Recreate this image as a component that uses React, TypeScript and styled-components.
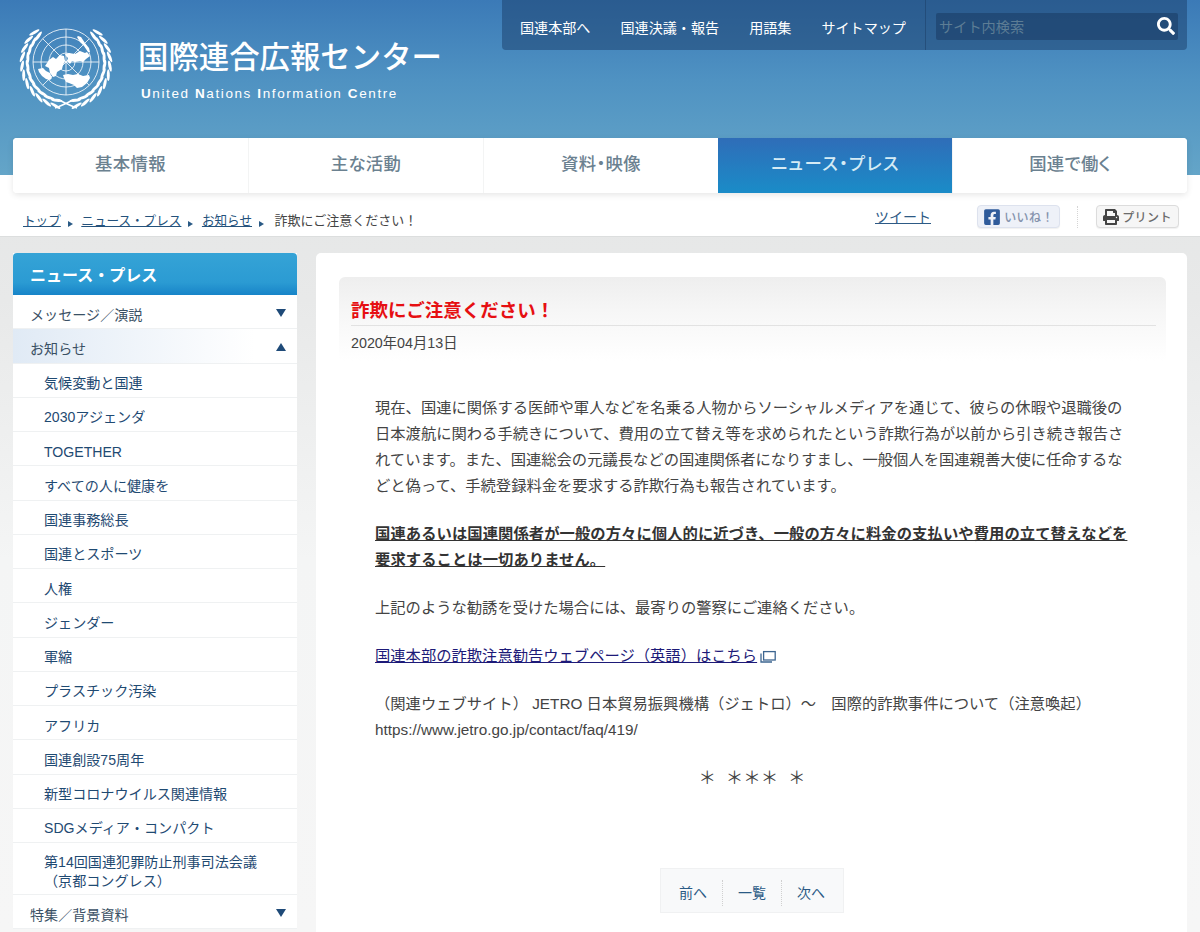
import styled, { createGlobalStyle } from 'styled-components';
import { FaFacebookSquare, FaPrint, FaSearch } from 'react-icons/fa';

const sans = `"Liberation Sans", "Noto Sans CJK JP", sans-serif`;

const GlobalStyle = createGlobalStyle`
  html, body {
    margin: 0;
    padding: 0;
    overflow: hidden;
  }
  body {
    font-family: ${sans};
    color: #444;
  }
  a {
    color: inherit;
  }
`;

const Page = styled.div`
  width: 1200px;
  height: 932px;
  overflow: hidden;
  background: linear-gradient(#e1e3e3 0, #e8e9e9 300px, #f4f5f5 560px, #f6f6f6 100%);
`;

const Top = styled.div`
  height: 237px;
  background: linear-gradient(#3b7ab7 0, #4f92c2 80px, #64a5c8 175px) top / 100% 175px no-repeat #fff;
  border-bottom: 1px solid #dcdede;
  box-sizing: border-box;
`;

const Masthead = styled.header`
  height: 138px;
  display: flex;
  justify-content: space-between;
  padding: 0 13px 0 18px;
`;

const Brand = styled.div`
  display: flex;
  align-items: flex-start;
  padding-top: 26px;
`;

const BrandText = styled.div`
  margin: 14px 0 0 25px;
  color: #fff;
`;

const BrandName = styled.div`
  font-size: 30.4px;
  line-height: 34px;
  font-weight: 500;
  margin-left: -1px;
`;

const BrandSub = styled.div`
  margin: 12px 0 0 2px;
  font-size: 13.5px;
  line-height: 16px;
  letter-spacing: 1.6px;

  b {
    font-weight: 700;
  }
`;

const Util = styled.div`
  width: 685px;
  height: 50px;
  display: flex;
  background: rgba(26, 62, 105, 0.5);
  border-radius: 0 0 4px 4px;
  box-sizing: border-box;
`;

const UtilNav = styled.nav`
  width: 424px;
  display: flex;
  align-items: center;
  gap: 30px;
  padding: 4px 0 0 18px;
  box-sizing: border-box;
  border-right: 1px solid rgba(25, 60, 100, 0.5);
`;

const UtilLink = styled.a`
  font-size: 14.1px;
  color: #fff;
  text-decoration: none;
  white-space: nowrap;
`;

const SearchWrap = styled.div`
  flex: 1;
  display: flex;
  align-items: center;
  padding: 0 9px 0 10px;
`;

const SearchBox = styled.div`
  width: 100%;
  height: 27px;
  margin-top: 2px;
  display: flex;
  align-items: center;
  justify-content: space-between;
  background: rgba(25, 58, 98, 0.55);
  padding: 0 2px 0 3px;
  box-sizing: border-box;
  border-radius: 2px;
`;

const Placeholder = styled.span`
  font-size: 14.2px;
  color: #5d7d95;
`;

const SearchIcon = styled(FaSearch)`
  color: #fff;
  font-size: 18px;
  margin-right: 1px;
`;

const GlobalNav = styled.nav`
  margin: 0 13px;
  height: 55px;
  display: grid;
  grid-template-columns: 235px 235px 235px 234px 235px;
  background: #fff;
  border-radius: 4px;
  box-shadow: 0 2px 6px rgba(0, 0, 0, 0.1);
  overflow: hidden;
`;

const Tab = styled.a<{ $active?: boolean }>`
  display: flex;
  align-items: center;
  justify-content: center;
  padding-bottom: 7px;
  box-sizing: border-box;
  font-size: 17.4px;
  font-weight: 500;
  font-feature-settings: 'palt';
  letter-spacing: ${(p) => (p.$active ? '1.3px' : '0.3px')};
  text-decoration: none;
  color: ${(p) => (p.$active ? '#d5ebf5' : '#6b8190')};
  background: ${(p) => (p.$active ? 'linear-gradient(#2f6db8, #1a8cc8)' : '#fff')};
  border-left: 1px solid ${(p) => (p.$active ? 'transparent' : '#f3f4f4')};
  &:first-child {
    border-left: 0;
  }
`;

const CrumbBar = styled.div`
  height: 43px;
  display: flex;
  align-items: center;
  justify-content: space-between;
  padding: 4px 21px 0 23px;
  box-sizing: border-box;
`;

const Crumbs = styled.div`
  display: flex;
  align-items: center;
  font-size: 12.6px;
  margin-top: 5px;
`;

const CrumbLink = styled.a`
  color: #24527c;
  text-decoration: underline;
`;

const CrumbArrow = styled.span`
  width: 0;
  height: 0;
  margin: 10px 8.5px 0 7px;
  border-left: 5px solid #2a5a85;
  border-top: 3px solid transparent;
  border-bottom: 3px solid transparent;
`;

const CrumbNow = styled.span`
  margin-left: 2px;
  font-size: 13px;
  color: #444;
`;

const Tools = styled.div`
  display: flex;
  align-items: center;
`;

const Tweet = styled.a`
  font-size: 14px;
  color: #2d5a85;
  text-decoration: underline;
  margin: -2px 46px 0 0;
`;

const ToolButton = styled.a<{ $like?: boolean }>`
  height: 23px;
  width: 83px;
  box-sizing: border-box;
  display: flex;
  align-items: center;
  justify-content: center;
  gap: 3px;
  font-size: 12px;
  font-weight: 500;
  letter-spacing: 0.4px;
  color: ${(p) => (p.$like ? '#8593ad' : '#6b6b6b')};
  background: ${(p) => (p.$like ? '#eef1f8' : '#f6f6f6')};
  border: 1px solid ${(p) => (p.$like ? '#dde2ee' : '#dcdcdc')};
  border-radius: 4px;
  box-shadow: 0 1px 1px rgba(0, 0, 0, 0.06);
`;

const FbIcon = styled(FaFacebookSquare)`
  color: #2f5b9a;
  font-size: 18px;
`;

const PrintIcon = styled(FaPrint)`
  color: #444;
  font-size: 16px;
`;

const ToolSep = styled.span`
  height: 22px;
  margin: 0 18px 0 17px;
  border-left: 1px dotted #d5d5d5;
`;

const Body = styled.div`
  display: flex;
  align-items: flex-start;
  gap: 19px;
  padding: 16px 13px 0;
`;

const Side = styled.aside`
  width: 284px;
  flex: none;
  background: #fff;
`;

const SideHead = styled.h2`
  margin: 0;
  height: 42px;
  display: flex;
  align-items: center;
  padding-left: 17px;
  font-size: 16px;
  font-weight: 700;
  color: #fff;
  border-radius: 4px 4px 0 0;
  background: linear-gradient(#35a3d6 0, #2b9bd3 70%, #1784c8 100%);
`;

const SideRow = styled.a<{ $sub?: boolean; $open?: boolean }>`
  display: flex;
  align-items: center;
  justify-content: space-between;
  box-sizing: border-box;
  min-height: 34.25px;
  padding: 10px 11px 3px ${(p) => (p.$sub ? '31px' : '17px')};
  font-size: 14.1px;
  line-height: 19px;
  color: ${(p) => (p.$sub ? '#1f4a72' : '#3a5064')};
  background: ${(p) => (p.$open ? 'linear-gradient(90deg, #e0eaf5, #fff 85%)' : '#fff')};
  border-bottom: 1px solid #eff1f2;
`;

const Caret = styled.span<{ $up?: boolean }>`
  width: 0;
  height: 0;
  border-left: 5px solid transparent;
  border-right: 5px solid transparent;
  ${(p) => (p.$up ? 'border-bottom: 8px solid #1f4a78;' : 'border-top: 8px solid #1f4a78;')}
  margin-bottom: 5px;
`;

const Main = styled.main`
  width: 871px;
  height: 700px;
  padding: 24px 21px 0 23px;
  box-sizing: border-box;
  background: #fff;
  border-radius: 5px 5px 0 0;
`;

const ArticleHead = styled.div`
  padding: 20px 10px 0 12px;
  height: 84px;
  box-sizing: border-box;
  border-radius: 6px 6px 0 0;
  background: linear-gradient(#eeeeee 0, #f6f6f6 40%, #ffffff 100%);
`;

const Title = styled.h1`
  margin: 0;
  height: 28px;
  font-size: 18.5px;
  line-height: 28px;
  font-weight: 700;
  color: #e60f12;
  border-bottom: 1px solid #e2e2e2;
`;

const DateLine = styled.div`
  margin-top: 8px;
  font-size: 14.3px;
  line-height: 18px;
  color: #444;
`;

const Article = styled.div`
  padding: 34px 37px 0 36px;
  font-size: 15.3px;
  line-height: 26px;
  color: #444;
`;

const Para = styled.p`
  margin: 0 0 22px;
  white-space: nowrap;
`;

const Strong = styled.p`
  margin: 0 0 22px;
  white-space: nowrap;
  font-weight: 700;
  letter-spacing: 0.08px;
  text-decoration: underline;
  color: #333;
`;

const ExtLink = styled.a`
  color: #1d1a78;
  text-decoration: underline;
`;

const ExtIcon = styled.svg`
  width: 16px;
  height: 13px;
  margin-left: 3px;
  vertical-align: -2px;
`;

const Stars = styled.p`
  margin: 4px 0 0;
  text-align: center;
  font-size: 17.5px;
  word-spacing: 5px;
`;

const Pager = styled.div`
  width: 184px;
  height: 45px;
  margin: 77px auto 0;
  padding-top: 4px;
  display: flex;
  align-items: center;
  justify-content: center;
  background: #f8f9fa;
  border: 1px solid #f0f1f2;
  box-sizing: border-box;
`;

const PagerLink = styled.a`
  width: 58px;
  text-align: center;
  font-size: 14px;
  color: #2a5a85;
  & + & {
    border-left: 1px dotted #d0d0d0;
  }
`;

// 花輪の葉は角度から計算する
const leaves = (side: 1 | -1) =>
  Array.from({ length: 11 }).flatMap((_, i) => {
    const a = ((14 + i * 12) * Math.PI) / 180;
    const deg = (a * 180) / Math.PI;
    const x = 48 + side * Math.sin(a) * 41;
    const y = 37 + Math.cos(a) * 41;
    return [16, 62].map((splay, j) => {
      const r = j === 0 ? splay : splay - 70;
      const rot = side === 1 ? -deg - r : deg + r;
      const ox = side * Math.sin(a) * (j === 0 ? 3 : -2.5);
      const oy = Math.cos(a) * (j === 0 ? 3 : -2.5);
      return (
        <ellipse
          key={`${side}-${i}-${j}`}
          cx={x + ox}
          cy={y + oy}
          rx={5.8}
          ry={1.5}
          fill="#fff"
          transform={`rotate(${rot} ${x + ox} ${y + oy})`}
        />
      );
    });
  });

const UnLogo = () => (
  <svg width="96" height="84" viewBox="0 0 96 84" style={{ flex: 'none' }}>
    <g fill="none" stroke="#fff" strokeWidth="0.8">
      <circle cx="48" cy="36" r="33" />
      <circle cx="48" cy="36" r="25" />
      <circle cx="48" cy="36" r="17" />
      <circle cx="48" cy="36" r="9" />
      <path d="M48 3v66M15 36h66M24.7 12.7l46.6 46.6M71.3 12.7L24.7 59.3" />
    </g>
    <g fill="#fff">
      <path d="M60 10l3 1 4 6 4 5 1 4-2 0-4-6-4-4-3-5z" />
      <path d="M31 34l4-3 3 2 4-4 4 1 1 5-2 4-1 4-5 3-1 4-3 1-3-4-1-5-4-2z" />
      <path d="M20 43l5-1 3 3 4 2 2 5-2 2-4-1-4-3-3-4z" />
      <path d="M47 28l4-1 6 1 5-3 5 2 2-1 3 4-4 3-3 3-3-1-5 1-3-1-2 3-3-3 1-3-2-2z" />
      <path d="M45 49l5-1 5 1 5-1 5 2 6-1 1 3-3 5-5 4-5 1-3-3-5-2-3-1-2-4z" />
    </g>
    {leaves(-1)}
    {leaves(1)}
    <path d="M37 82c6-2 14-6 18-8M59 82c-6-2-14-6-18-8" fill="none" stroke="#fff" strokeWidth="1.4" />
  </svg>
);

const utilLinks = ['国連本部へ', '国連決議・報告', '用語集', 'サイトマップ'];
const tabs = ['基本情報', '主な活動', '資料・映像', 'ニュース・プレス', '国連で働く'];
const subLinks = [
  '気候変動と国連',
  '2030アジェンダ',
  'TOGETHER',
  'すべての人に健康を',
  '国連事務総長',
  '国連とスポーツ',
  '人権',
  'ジェンダー',
  '軍縮',
  'プラスチック汚染',
  'アフリカ',
  '国連創設75周年',
  '新型コロナウイルス関連情報',
  'SDGメディア・コンパクト',
];

const App = () => {
  return (
    <Page>
      <GlobalStyle />
      <Top>
        <Masthead>
          <Brand>
            <UnLogo />
            <BrandText>
              <BrandName>国際連合広報センター</BrandName>
              <BrandSub>
                <b>U</b>nited <b>N</b>ations <b>I</b>nformation <b>C</b>entre
              </BrandSub>
            </BrandText>
          </Brand>
          <Util>
            <UtilNav>
              {utilLinks.map((label) => (
                <UtilLink key={label}>{label}</UtilLink>
              ))}
            </UtilNav>
            <SearchWrap>
              <SearchBox>
                <Placeholder>サイト内検索</Placeholder>
                <SearchIcon />
              </SearchBox>
            </SearchWrap>
          </Util>
        </Masthead>
        <GlobalNav>
          {tabs.map((label, i) => (
            <Tab key={label} $active={i === 3}>
              {label}
            </Tab>
          ))}
        </GlobalNav>
        <CrumbBar>
          <Crumbs>
            <CrumbLink>トップ</CrumbLink>
            <CrumbArrow />
            <CrumbLink>ニュース・プレス</CrumbLink>
            <CrumbArrow />
            <CrumbLink>お知らせ</CrumbLink>
            <CrumbArrow />
            <CrumbNow>詐欺にご注意ください！</CrumbNow>
          </Crumbs>
          <Tools>
            <Tweet>ツイート</Tweet>
            <ToolButton $like>
              <FbIcon />
              いいね！
            </ToolButton>
            <ToolSep />
            <ToolButton>
              <PrintIcon />
              プリント
            </ToolButton>
          </Tools>
        </CrumbBar>
      </Top>
      <Body>
        <Side>
          <SideHead>ニュース・プレス</SideHead>
          <SideRow>
            メッセージ／演説
            <Caret />
          </SideRow>
          <SideRow $open>
            お知らせ
            <Caret $up />
          </SideRow>
          {subLinks.map((label) => (
            <SideRow key={label} $sub>
              {label}
            </SideRow>
          ))}
          <SideRow $sub>
            <span>
              第14回国連犯罪防止刑事司法会議
              <br />
              （京都コングレス）
            </span>
          </SideRow>
          <SideRow>
            特集／背景資料
            <Caret />
          </SideRow>
        </Side>
        <Main>
          <ArticleHead>
            <Title>詐欺にご注意ください！</Title>
            <DateLine>2020年04月13日</DateLine>
          </ArticleHead>
          <Article>
            <Para>
              現在、国連に関係する医師や軍人などを名乗る人物からソーシャルメディアを通じて、彼らの休暇や退職後の
              <br />
              日本渡航に関わる手続きについて、費用の立て替え等を求められたという詐欺行為が以前から引き続き報告さ
              <br />
              れています。また、国連総会の元議長などの国連関係者になりすまし、一般個人を国連親善大使に任命するな
              <br />
              どと偽って、手続登録料金を要求する詐欺行為も報告されています。
            </Para>
            <Strong>
              国連あるいは国連関係者が一般の方々に個人的に近づき、一般の方々に料金の支払いや費用の立て替えなどを
              <br />
              要求することは一切ありません。
            </Strong>
            <Para>上記のような勧誘を受けた場合には、最寄りの警察にご連絡ください。</Para>
            <Para>
              <ExtLink>国連本部の詐欺注意勧告ウェブページ（英語）はこちら</ExtLink>
              <ExtIcon viewBox="0 0 16 13" fill="none" stroke="#3c6590" strokeWidth="1.3">
                <rect x="3.6" y="1.6" width="11.6" height="8.4" />
                <path d="M1 3.6v8.4h11" />
              </ExtIcon>
            </Para>
            <Para>
              （関連ウェブサイト） JETRO 日本貿易振興機構（ジェトロ）〜　国際的詐欺事件について（注意喚起）
              <br />
              https://www.jetro.go.jp/contact/faq/419/
            </Para>
            <Stars>＊ ＊＊＊ ＊</Stars>
            <Pager>
              <PagerLink>前へ</PagerLink>
              <PagerLink>一覧</PagerLink>
              <PagerLink>次へ</PagerLink>
            </Pager>
          </Article>
        </Main>
      </Body>
    </Page>
  );
};

export default App;
